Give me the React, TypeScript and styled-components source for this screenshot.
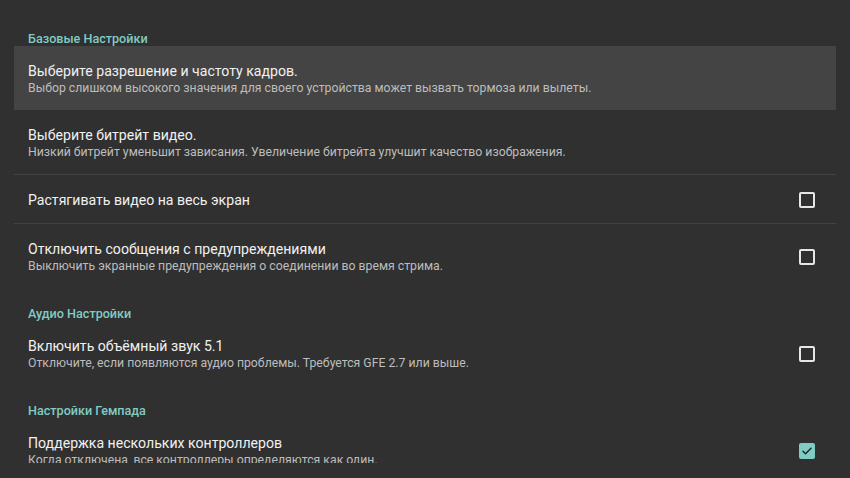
import React from "react";
import styled, { createGlobalStyle } from "styled-components";

const GlobalStyle = createGlobalStyle`
  html, body {
    margin: 0;
    padding: 0;
    background: #303030;
  }
  body {
    font-family: Roboto, "Noto Sans", "Liberation Sans", sans-serif;
    -webkit-font-smoothing: antialiased;
  }
`;

const Screen = styled.div`
  width: 850px;
  height: 478px;
  background: #303030;
  overflow: hidden;
`;

const Viewport = styled.div`
  height: 463px;
  overflow: hidden;
`;

const List = styled.div`
  display: flex;
  flex-direction: column;
  padding: 13px 14px 0;
`;

const Category = styled.div`
  height: 16px;
  padding: 17px 14px 0;
  display: flex;
  align-items: center;
  font-size: 12.6px;
  font-weight: 500;
  color: #80cbc4;
  &:first-child {
    padding-top: 17px;
  }
`;

const Row = styled.div<{ $focused?: boolean; $single?: boolean }>`
  height: ${(p) => (p.$single ? 48 : 64)}px;
  box-sizing: border-box;
  padding: 2px 21px 0 14px;
  display: flex;
  align-items: center;
  justify-content: space-between;
  background: ${(p) => (p.$focused ? "#444444" : "transparent")};
`;

const Texts = styled.div`
  display: flex;
  flex-direction: column;
`;

const Title = styled.div`
  font-size: 14.1px;
  line-height: 18px;
  color: #f0f0f0;
`;

const Summary = styled.div`
  font-size: 12.25px;
  line-height: 16px;
  color: #bdbdbd;
`;

const Divider = styled.div`
  height: 1px;
  background: #424242;
`;

const Box = styled.div<{ $checked?: boolean }>`
  width: 16px;
  height: 16px;
  box-sizing: border-box;
  border-radius: 2px;
  border: ${(p) => (p.$checked ? "none" : "2px solid #e6e6e6")};
  background: ${(p) => (p.$checked ? "#80cbc4" : "transparent")};
  display: flex;
  align-items: center;
  justify-content: center;
`;

const Checkbox = ({ checked }: { checked?: boolean }) => (
  <Box $checked={checked}>
    {checked && (
      <svg width="12" height="12" viewBox="0 0 24 24">
        <path
          d="M4 12.5l5 5L20 6.5"
          fill="none"
          stroke="#1f2b2a"
          strokeWidth="3"
          strokeLinecap="round"
          strokeLinejoin="round"
        />
      </svg>
    )}
  </Box>
);

type Pref = {
  title: string;
  summary?: string;
  check?: boolean;
  checked?: boolean;
  focused?: boolean;
  divider?: boolean;
};

const Preference = ({ title, summary, check, checked, focused }: Pref) => (
  <Row $focused={focused} $single={!summary}>
    <Texts>
      <Title>{title}</Title>
      {summary && <Summary>{summary}</Summary>}
    </Texts>
    {check && <Checkbox checked={checked} />}
  </Row>
);

const sections: { name: string; items: Pref[] }[] = [
  {
    name: "Базовые Настройки",
    items: [
      {
        title: "Выберите разрешение и частоту кадров.",
        summary:
          "Выбор слишком высокого значения для своего устройства может вызвать тормоза или вылеты.",
        focused: true,
      },
      {
        title: "Выберите битрейт видео.",
        summary:
          "Низкий битрейт уменьшит зависания. Увеличение битрейта улучшит качество изображения.",
        divider: true,
      },
      { title: "Растягивать видео на весь экран", check: true, divider: true },
      {
        title: "Отключить сообщения с предупреждениями",
        summary: "Выключить экранные предупреждения о соединении во время стрима.",
        check: true,
      },
    ],
  },
  {
    name: "Аудио Настройки",
    items: [
      {
        title: "Включить объёмный звук 5.1",
        summary:
          "Отключите, если появляются аудио проблемы. Требуется GFE 2.7 или выше.",
        check: true,
      },
    ],
  },
  {
    name: "Настройки Гемпада",
    items: [
      {
        title: "Поддержка нескольких контроллеров",
        summary: "Когда отключена, все контроллеры определяются как один.",
        check: true,
        checked: true,
      },
    ],
  },
];

export default function App() {
  return (
    <Screen>
      <GlobalStyle />
      <Viewport>
        <List>
          {sections.map((s) => (
            <React.Fragment key={s.name}>
              <Category>{s.name}</Category>
              {s.items.map((it) => (
                <React.Fragment key={it.title}>
                  <Preference {...it} />
                  {it.divider && <Divider />}
                </React.Fragment>
              ))}
            </React.Fragment>
          ))}
        </List>
      </Viewport>
    </Screen>
  );
}
